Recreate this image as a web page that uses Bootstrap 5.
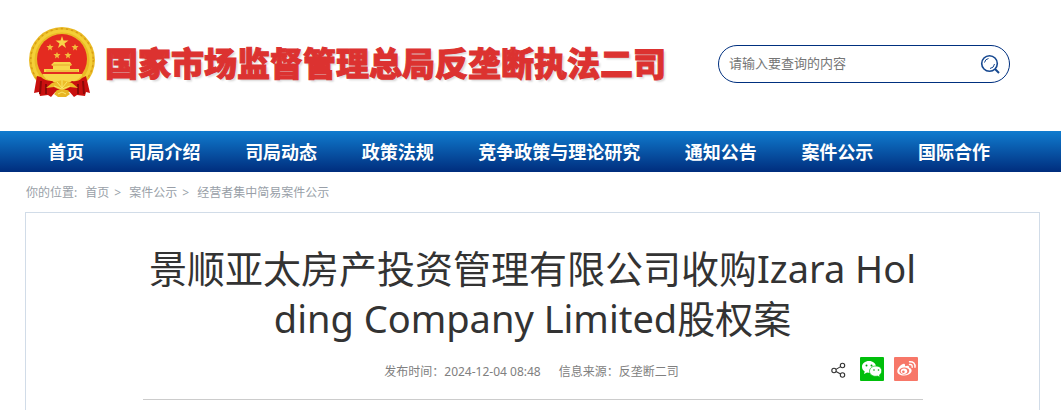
<!DOCTYPE html>
<html lang="zh-CN">
<head>
<meta charset="utf-8">
<meta name="viewport" content="width=device-width, initial-scale=1">
<title>国家市场监督管理总局反垄断执法二司</title>
<link href="https://cdn.jsdelivr.net/npm/bootstrap@5.3.0/dist/css/bootstrap.min.css" rel="stylesheet">
<style>
  body { font-family: "Noto Sans", "Noto Sans CJK SC", sans-serif; color: #333; }
  a { text-decoration: none; }
  .site-head { padding: 24px 51px 32px 26px; }
  .site-name { font: 900 33px/40px "Noto Sans CJK SC", sans-serif; color: #dc3230; -webkit-text-stroke: 1px #dc3230; text-shadow: 2px 2px 2px rgba(0,0,0,.15); }
  .search-box { width: 292px; height: 38px; margin-top: 4px; border: 1px solid #00307f; border-radius: 19px; padding: 0 8px 0 10px; }
  .search-box input { font-size: 13px; color: #333; background: none; box-shadow: none !important; }
  .search-box input::placeholder { color: #757575; opacity: 1; }
  .main-nav { background: linear-gradient(#107ccf, #002d7d); padding: 0 71px 0 48px; height: 41px; }
  .main-nav a { color: #fff; font-size: 18px; line-height: 42px; font-weight: 700; }
  .crumbs { font-size: 12px; line-height: 20px; padding: 11px 26px 9px; color: #999fa8; }
  .crumbs a { color: inherit; }
  .crumbs span a { margin-right: 2px; }
  .article { margin: 0 21px 0 25px; border: 1px solid #d1dce8; border-bottom: 0; min-height: 198px; }
  .article-body { max-width: 780px; padding-top: 30px; }
  .article h1 { font-size: 38px; line-height: 50px; font-weight: 400; word-break: break-all; margin: 0; }
  .meta-row { border-bottom: 1px solid #ccc; height: 57px; font-size: 12px; color: #808080; padding: 14px 5px 0 0; }
  .meta-text { line-height: 20px; padding: 5px 0 0 95px; gap: 18px; }
  .share-set { gap: 10px; }
  .share-set button { width: 24px; height: 24px; }
</style>
</head>
<body>
<header class="site-head d-flex align-items-center justify-content-between">
  <a href="#" class="d-flex align-items-center gap-2">
    <svg width="71" height="75" viewBox="0 0 71 75" aria-hidden="true">
      <circle cx="36" cy="36" r="33" fill="#eabb25"/>
      <circle cx="36" cy="36" r="30" fill="none" stroke="#d79d16" stroke-width="4" stroke-dasharray="2 3"/>
      <circle cx="36" cy="36" r="29" fill="none" stroke="#f4cf37" stroke-width="3"/>
      <circle cx="36" cy="35" r="25" fill="#e42b20"/>
      <path d="m36 12 1.500 4.500h5l-4 3 1.500 4.500-4-3-4 3 1.500-4.500-4-3h5Z" fill="#f8d348"/>
      <path id="emblem-star" d="m24 20 1 2h2.500l-2 2 .5 2.500-2-1.500-2 1.500.5-2.500-2-2h2.500Z" fill="#f3bd3c"/>
      <use href="#emblem-star" x="25"/><use href="#emblem-star" x="7" y="8"/><use href="#emblem-star" x="18" y="8"/>
      <path d="M28 38h16l2 3-2 1v3h9v4H18v-4h9v-3l-2-1ZM16 49h40v3q-6 6-12 6H28q-10-2-12-9Z" fill="#f7d74a"/>
      <path d="M27 41h18M20 47h32" stroke="#e8a62e"/>
      <path d="M16 49h40" stroke="#e42b20" stroke-width="2"/>
      <path d="M11 52 8 69l5-1 1 4 8-1 3 2 6-7h11l6 7 3-2 8 1 1-4 4 1-4-17-4 2q-4 4-10 3l-6 4H31l-5-4q-7 0-11-4Z" fill="#c9100f"/>
      <path d="m15 57-1 13M20 60v10M52 60v10M57 57l1 13" stroke="#8c0908" stroke-width="2"/>
      <path d="m20 64 6-5 10-3 10 3 6 5-8-1-8 4-8-4Z" fill="#edbd29"/>
      <path d="m28 62 8 3 8-3M31 58l5 6 5-6M36 56v8" stroke="#fae66a" fill="none"/>
      <path d="m28 70 4-4h8l4 4-4 3h-8Z" fill="#e8b524"/>
      <path d="m32 70 4-2 4 2" stroke="#fbe56b" fill="none"/>
    </svg>
    <span class="site-name text-nowrap">国家市场监督管理总局反垄断执法二司</span>
  </a>
  <form class="search-box d-flex align-items-center">
    <input type="text" class="form-control border-0 p-0" placeholder="请输入要查询的内容" aria-label="请输入要查询的内容">
    <button type="button" class="btn border-0 p-0 d-flex" aria-label="搜索">
      <svg width="22" height="22" viewBox="0 0 22 22" fill="none" stroke="#164890"><circle cx="10.500" cy="10.500" r="7.800" stroke-width="1.600"/><path d="m16 16 4 4" stroke-width="2"/><path d="M5.500 9.500a5 5 0 0 1 4-4M15.500 11a5.300 5.300 0 0 1-4.500 4.500"/></svg>
    </button>
  </form>
</header>
<nav class="main-nav d-flex justify-content-between text-nowrap">
  <a href="#">首页</a><a href="#">司局介绍</a><a href="#">司局动态</a><a href="#">政策法规</a><a href="#">竞争政策与理论研究</a><a href="#">通知公告</a><a href="#">案件公示</a><a href="#">国际合作</a>
</nav>
<nav class="crumbs d-flex gap-2" aria-label="你的位置">
  <span>你的位置:</span><span><a href="#">首页</a> &gt;</span><span><a href="#">案件公示</a> &gt;</span><a href="#">经营者集中简易案件公示</a>
</nav>
<main class="article">
  <div class="article-body mx-auto">
    <h1 class="text-center">景顺亚太房产投资管理有限公司收购Izara Holding Company Limited股权案</h1>
    <div class="meta-row d-flex align-items-start">
      <div class="meta-text flex-fill d-flex justify-content-center">
        <span>发布时间：2024-12-04 08:48</span><span>信息来源：反垄断二司</span>
      </div>
      <div class="d-flex share-set">
        <button type="button" class="btn border-0 p-0 d-flex" aria-label="分享">
          <svg width="24" height="24" viewBox="0 0 24 24" fill="none" stroke="#333" stroke-width="1.100"><circle cx="8" cy="13.500" r="2.200"/><circle cx="16.500" cy="8.500" r="2.200"/><circle cx="16.500" cy="18" r="2.200"/><path d="m10 12.400 4.600-2.800M10 14.600l4.600 2.400"/></svg>
        </button>
        <button type="button" class="btn border-0 p-0 d-flex" aria-label="微信">
          <svg width="24" height="24" viewBox="0 0 24 24"><rect width="24" height="24" rx="1" fill="#00bf0b"/><path d="M9 4C5 4 2 6.500 2 9.800c0 2 1 3.500 2.700 4.600L4 17l3-1.500c5 1.300 9-1.500 9-5.700C16 6.500 13 4 9 4Z" fill="#fff"/><path d="M16 9c-3.700 0-6.500 2.200-6.500 5.200 0 3.500 3.700 5.800 8 4.900l2.500 1.200-.5-2.200c4-3 2.500-9.100-3.500-9.100Z" fill="#fff" stroke="#00bf0b" stroke-width=".7"/><g fill="#00a60b"><circle cx="6.500" cy="8.500" r="1"/><circle cx="11.500" cy="8.500" r="1"/><circle cx="14" cy="13" r=".8"/><circle cx="18.500" cy="13" r=".8"/></g></svg>
        </button>
        <button type="button" class="btn border-0 p-0 d-flex" aria-label="微博">
          <svg width="24" height="24" viewBox="0 0 24 24"><rect width="24" height="24" rx="1" fill="#f77768"/><path d="M10.500 7c.8.500.7 1.400.4 2.300 2-.9 4.700-.9 4.300 1.400 5 1.600 2 7.800-5.200 7.800-4 0-6.700-1.700-6.700-4.200C3.300 10.800 8.500 6 10.500 7Z" fill="#fff"/><ellipse cx="10.300" cy="14" rx="5" ry="3.400" fill="#f77768"/><ellipse cx="10" cy="14.200" rx="3.200" ry="2.700" fill="#fff"/><circle cx="9.400" cy="14.700" r="1.300" fill="#f77768"/><path d="M15.500 7.500q3-.3 2.700 2.700M15.500 4.700q6-.3 5.500 5.500" fill="none" stroke="#fff" stroke-width="1.400" stroke-linecap="round"/></svg>
        </button>
      </div>
    </div>
  </div>
</main>
<script src="https://cdn.jsdelivr.net/npm/bootstrap@5.3.0/dist/js/bootstrap.bundle.min.js"></script>
</body>
</html>
